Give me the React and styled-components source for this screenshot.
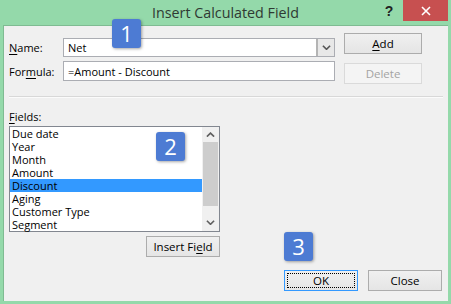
import React from 'react';
import styled, { createGlobalStyle } from 'styled-components';

const GlobalStyle = createGlobalStyle`
  html, body {
    margin: 0;
    padding: 0;
    background: #ffffff;
  }
  body {
    font-family: "Segoe UI", "Open Sans", "Noto Sans", sans-serif;
    font-size: 11px;
    color: #000;
  }
`;

const Window = styled.div`
  position: relative;
  width: 451px;
  height: 304px;
  box-sizing: border-box;
  background: #94d9aa;
  padding: 0 3px 3px 3px;
  display: flex;
  flex-direction: column;
`;

const TitleBar = styled.div`
  height: 25px;
  display: flex;
  align-items: flex-start;
  position: relative;
`;

const Title = styled.div`
  position: absolute;
  left: 0;
  right: 0;
  top: 3px;
  text-align: center;
  font-size: 14.3px;
  line-height: 20px;
  color: #2f3a33;
  pointer-events: none;
`;

const TitleControls = styled.div`
  margin-left: auto;
  display: flex;
  align-items: flex-start;
`;

const HelpButton = styled.div`
  width: 28px;
  height: 21px;
  display: flex;
  align-items: center;
  justify-content: center;
  font-family: "Liberation Sans", Arial, sans-serif;
  font-weight: bold;
  font-size: 14px;
  color: #222;
`;

const CloseButton = styled.div`
  width: 45px;
  height: 21px;
  background: #c75050;
  display: flex;
  align-items: center;
  justify-content: center;
`;

const Body = styled.div`
  flex: 1;
  background: #f0f0f0;
  border: 1px solid #7fbb92;
  border-bottom: none;
  border-right: none;
  padding: 0 6px 0 5px;
  display: flex;
  flex-direction: column;
`;

const TopRow = styled.div`
  display: flex;
  align-items: flex-start;
  padding-top: 7px;
`;

const FormGrid = styled.div`
  margin-top: 5px;
  display: grid;
  grid-template-columns: 54px 272px;
  grid-template-rows: 19px 20px;
  row-gap: 4px;
  align-items: center;
`;

const Label = styled.label`
  line-height: 15px;
  white-space: nowrap;
`;

const Key = styled.span`
  text-decoration: underline;
  text-underline-offset: 2px;
`;

const Input = styled.div`
  box-sizing: border-box;
  height: 100%;
  background: #fff;
  border: 1px solid #abadb3;
  padding-left: 4px;
  display: flex;
  align-items: center;
`;

const ComboText = styled.div`
  flex: 1;
`;

const ComboArrow = styled.div`
  width: 18px;
  height: 100%;
  box-sizing: border-box;
  border-left: 2px solid #b4b4b4;
  background: #e8e8e8;
  display: flex;
  align-items: center;
  justify-content: center;
`;

const ButtonCol = styled.div`
  margin-left: 9px;
  display: flex;
  flex-direction: column;
  gap: 9px;
`;

const Button = styled.div`
  box-sizing: border-box;
  width: ${(p) => p.w || 74}px;
  height: 21px;
  display: flex;
  align-items: center;
  justify-content: center;
  position: relative;
  background: ${(p) => (p.disabled ? '#f4f4f4' : 'linear-gradient(#f0f0f0, #e5e5e5)')};
  border: 1px solid ${(p) => (p.focused ? '#3399ff' : p.disabled ? '#dadada' : '#acacac')};
  color: ${(p) => (p.disabled ? '#a3a3a3' : '#000')};
  font-size: 11.5px;
  line-height: 15px;
`;

const FocusRing = styled.div`
  position: absolute;
  inset: 2px;
  border: 1px dotted #000;
`;

const Separator = styled.div`
  margin: 12px -1px 0 0;
  height: 1px;
  background: #d8d8d8;
  border-bottom: 1px solid #fbfbfb;
`;

const FieldsBlock = styled.div`
  width: 211px;
  margin-top: 11px;
  display: flex;
  flex-direction: column;
  align-items: flex-end;
`;

const FieldsLabel = styled(Label)`
  align-self: flex-start;
  margin-bottom: 2px;
`;

const ListBox = styled.div`
  box-sizing: border-box;
  width: 211px;
  height: 106px;
  background: #fff;
  border: 1px solid #828790;
  display: flex;
`;

const Items = styled.div`
  flex: 1;
  display: flex;
  flex-direction: column;
`;

const Item = styled.div`
  height: 13px;
  line-height: 13px;
  padding-left: 2px;
  background: ${(p) => (p.selected ? '#3399ff' : 'transparent')};
  color: #000;
  white-space: nowrap;
`;

const ScrollBar = styled.div`
  width: 17px;
  background: #f0f0f0;
  display: flex;
  flex-direction: column;
`;

const ScrollArrow = styled.div`
  height: ${(p) => p.h}px;
  display: flex;
  align-items: center;
  justify-content: center;
`;

const ScrollThumb = styled.div`
  height: 64px;
  margin: 0 1px;
  background: #cdcdcd;
`;

const ScrollSpace = styled.div`
  flex: 1;
`;

const InsertButton = styled(Button)`
  margin-top: 4px;
`;

const BottomRow = styled.div`
  margin-top: 13px;
  display: flex;
  justify-content: flex-end;
  gap: 10px;
`;

const Badge = styled.div`
  position: absolute;
  left: ${(p) => p.x}px;
  top: ${(p) => p.y}px;
  width: 29px;
  height: 29px;
  border-radius: 3px;
  background: #4d7bd3;
  box-shadow: 1px 1px 3px rgba(0, 0, 0, 0.35);
  color: #fff;
  font-family: "Open Sans", "Noto Sans", sans-serif;
  font-size: 22px;
  line-height: 29px;
  text-align: center;
`;

const Chevron = ({ up, size = 9, color = '#606060' }) => (
  <svg width={size} height={size * 0.6} viewBox="0 0 10 6">
    <path
      d={up ? 'M1 5.2 L5 1.2 L9 5.2' : 'M1 0.8 L5 4.8 L9 0.8'}
      fill="none"
      stroke={color}
      strokeWidth="1.8"
    />
  </svg>
);

const fields = ['Due date', 'Year', 'Month', 'Amount', 'Discount', 'Aging', 'Customer Type', 'Segment'];

export default function App() {
  return (
    <>
      <GlobalStyle />
      <Window>
        <TitleBar>
          <Title>Insert Calculated Field</Title>
          <TitleControls>
            <HelpButton>?</HelpButton>
            <CloseButton>
              <svg width="10" height="10" viewBox="0 0 10 10">
                <path d="M1 1 L9 9 M9 1 L1 9" stroke="#fff" strokeWidth="1.6" />
              </svg>
            </CloseButton>
          </TitleControls>
        </TitleBar>
        <Body>
          <TopRow>
            <FormGrid>
              <Label><Key>N</Key>ame:</Label>
              <Input>
                <ComboText>Net</ComboText>
                <ComboArrow>
                  <Chevron color="#555" />
                </ComboArrow>
              </Input>
              <Label>For<Key>m</Key>ula:</Label>
              <Input>=Amount - Discount</Input>
            </FormGrid>
            <ButtonCol>
              <Button w={78}><span><Key>A</Key>dd</span></Button>
              <Button w={78} disabled>Delete</Button>
            </ButtonCol>
          </TopRow>
          <Separator />
          <FieldsBlock>
            <FieldsLabel><Key>F</Key>ields:</FieldsLabel>
            <ListBox>
              <Items>
                {fields.map((f) => (
                  <Item key={f} selected={f === 'Discount'}>{f}</Item>
                ))}
              </Items>
              <ScrollBar>
                <ScrollArrow h={15}><Chevron up /></ScrollArrow>
                <ScrollThumb />
                <ScrollSpace />
                <ScrollArrow h={17}><Chevron /></ScrollArrow>
              </ScrollBar>
            </ListBox>
            <InsertButton><span>Insert Fi<Key>e</Key>ld</span></InsertButton>
          </FieldsBlock>
          <BottomRow>
            <Button focused>
              <FocusRing />
              OK
            </Button>
            <Button>Close</Button>
          </BottomRow>
        </Body>
        <Badge x={112} y={19}>1</Badge>
        <Badge x={156} y={132}>2</Badge>
        <Badge x={284} y={232}>3</Badge>
      </Window>
    </>
  );
}
